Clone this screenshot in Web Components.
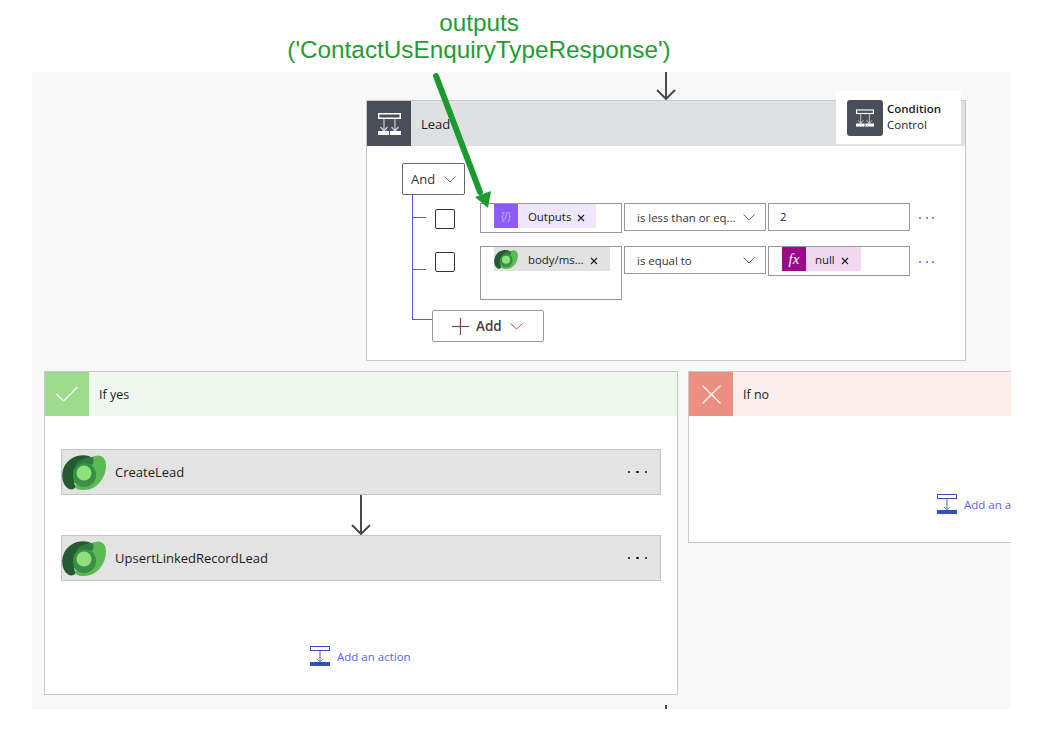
<!DOCTYPE html>
<html>
<head>
<meta charset="utf-8">
<title>Condition</title>
<style>
  html, body { margin: 0; background: #fff; }
  body { font-family: "Open Sans", "Noto Sans", sans-serif; color: #1b1b1b; }
</style>
</head>
<body>
<flow-page></flow-page>

<script>
const LOGO = (w, h) => `
  <svg width="${w}" height="${h}" viewBox="0 0 44 35">
    <path d="M33 1c6-2 11 2 11 9 0 13-9 25-22 25-6 0-10-2-12-6 5 2 11 1 15-3 6-6 6-15 2-20-1-2 2-4 6-5z" fill="#5cba55"/>
    <path d="M27 1C17-2 6 3 2 12c-4 9-1 19 5 22 3 1 7 0 6-3-1-4-2-9 1-14 3-6 9-9 15-8 2-3 1-7-2-8z" fill="#235c30"/>
    <path d="M16 7c4-3 9-5 14-5 2 1 2 5 0 8-6-1-11 1-15 6-2-3-1-7 1-9z" fill="#2f7d3e"/>
    <path d="M12 27c2 3 6 5 10 5 8 0 13-7 12-14-1-6-6-10-11-10-7 0-13 5-12 13z" fill="#3a9045"/>
    <circle cx="22" cy="18" r="7.500" fill="#8fe27a"/>
  </svg>`;

const COND_ICON = (w, h) => `
  <svg width="${w}" height="${h}" viewBox="0 0 23 22" fill="none" stroke="#fff" style="display:block">
    <rect x=".75" y=".75" width="21.500" height="4.500" stroke-width="1.500"/>
    <path d="M6 6v12M17 6v12M2.500 14l3.500 4 3.500-4M13.500 14l3.500 4 3.500-4" stroke-width="1.200" stroke="#c9ccd2"/>
    <rect x="0" y="18" width="11" height="4" fill="#fff" stroke="none"/>
    <rect x="12" y="18" width="11" height="4" fill="#fff" stroke="none"/>
  </svg>`;

class FlowArrow extends HTMLElement {
  constructor() {
    super();
    this.attachShadow({ mode: 'open' });
    const h = Number(this.getAttribute('h') || 28);
    this.shadowRoot.innerHTML = `
      <style>
        :host { display: block; width: 20px; height: ${h}px; }
        svg { display: block; }
      </style>
      <svg width="20" height="${h}" viewBox="0 0 20 ${h}" fill="none" stroke="#4a4a4a" stroke-width="2">
        <path d="M10 0v${h - 1}M1 ${h - 10}l9 9 9-9"/>
      </svg>`;
  }
}
customElements.define('flow-arrow', FlowArrow);

class CondToken extends HTMLElement {
  constructor() {
    super();
    this.attachShadow({ mode: 'open' });
    this.shadowRoot.innerHTML = `
      <style>
        :host {
          display: flex;
          align-items: center;
          height: 24px;
          font-size: 11.4px;
          color: #1b1b1b;
          background: var(--tok-bg, #eee);
        }
        .ic {
          width: 24px;
          height: 24px;
          flex: none;
          display: flex;
          align-items: center;
          justify-content: center;
          background: var(--ic-bg, transparent);
        }
        .txt { margin-left: var(--txt-ml, 10px); white-space: nowrap; }
        svg.x { margin-left: 6px; flex: none; margin-right: auto; position: relative; top: 2px; }
      </style>
      <span class="ic"><slot name="icon"></slot></span>
      <span class="txt"><slot></slot></span>
      <svg class="x" width="8" height="8" viewBox="0 0 8 8" stroke="#222" stroke-width="1.200"><path d="M1 1l6 6M7 1l-6 6"/></svg>`;
  }
}
customElements.define('cond-token', CondToken);

class CondRow extends HTMLElement {
  constructor() {
    super();
    this.attachShadow({ mode: 'open' });
    const tick = this.getAttribute('tick');
    const lh = this.getAttribute('left-h');
    const sh = this.getAttribute('select-h');
    const vh = this.getAttribute('value-h');
    const dy = this.getAttribute('dots-y');
    this.shadowRoot.innerHTML = `
      <style>
        :host { display: flex; align-items: flex-start; }
        .tick { width: 13px; height: 1px; background: #4a5af0; margin-top: ${tick}px; flex: none; }
        .check {
          width: 18px; height: 18px;
          border: 1px solid #333;
          border-radius: 2px;
          background: #fff;
          margin: 6px 25px 0 9px;
          flex: none;
        }
        .box {
          box-sizing: border-box;
          border: 1px solid #999;
          background: #fff;
          width: 142px;
          flex: none;
          font-size: 11.4px;
        }
        .left { height: ${lh}px; padding: 0 0 0 13px; margin-right: 2px; }
        .op {
          height: ${sh}px;
          margin-right: 2px;
          display: flex;
          align-items: center;
          justify-content: space-between;
          padding: 0 10px 0 12px;
          color: #333;
          white-space: nowrap;
        }
        .val { height: ${vh}px; }
        .dots {
          margin-left: 9px;
          margin-top: ${dy}px;
          display: flex;
          gap: 4.500px;
        }
        .dots i { width: 2px; height: 2px; border-radius: 50%; background: #5563f8; display: block; }
      </style>
      <div class="tick"></div>
      <div class="check"></div>
      <div class="box left"><slot name="left"></slot></div>
      <div class="box op"><span>${this.getAttribute('op')}</span>
        <svg width="12" height="7" viewBox="0 0 12 7" fill="none" stroke="#666"><path d="M.5.5L6 6 11.500.5"/></svg>
      </div>
      <div class="box val"><slot name="value"></slot></div>
      <div class="dots"><i></i><i></i><i></i></div>`;
  }
}
customElements.define('cond-row', CondRow);

class ConditionCard extends HTMLElement {
  constructor() {
    super();
    this.attachShadow({ mode: 'open' });
    this.shadowRoot.innerHTML = `
      <style>
        :host {
          display: block;
          position: relative;
          box-sizing: border-box;
          width: 600px;
          height: 261px;
          background: #fff;
          border: 1px solid #c8c8c8;
        }
        .head {
          height: 45px;
          background: #dfe0e2;
          display: flex;
          align-items: center;
          font-size: 13px;
        }
        .head .ic {
          width: 44px;
          height: 45px;
          background: #484f58;
          display: flex;
          align-items: center;
          justify-content: center;
          margin-right: 10px;
        }
        .tip {
          position: absolute;
          left: 469px;
          top: -10px;
          width: 125px;
          height: 54px;
          box-sizing: border-box;
          background: #fff;
          border-bottom: 1px solid #e4e4e4;
          display: flex;
          align-items: flex-start;
          padding: 9px 0 0 11px;
          font-size: 11.500px;
          line-height: 16px;
          color: #1b1b1b;
        }
        .tip .ic {
          width: 36px;
          height: 36px;
          border-radius: 3px;
          background: #484f58;
          margin-right: 4px;
          display: flex;
          align-items: center;
          justify-content: center;
        }
        .tip .t { padding-top: 1px; }
        .tip b { display: block; font-weight: 600; }
        .body { padding: 17px 0 0 35px; }
        .and {
          box-sizing: border-box;
          width: 63px;
          height: 32px;
          border: 1px solid #666;
          border-radius: 2px;
          display: flex;
          align-items: center;
          justify-content: space-between;
          padding: 0 8px;
          font-size: 13px;
          color: #333;
        }
        .tree {
          margin-left: 10px;
          border-left: 1px solid #4a5af0;
          height: 125px;
          box-sizing: border-box;
          padding-top: 8px;
        }
        .rows { display: flex; flex-direction: column; gap: 13px; }
        .add-row { display: flex; margin-top: 10px; }
        .add-row .tick { width: 19px; height: 1px; background: #4a5af0; margin-top: 9px; }
        .add {
          box-sizing: border-box;
          width: 112px;
          height: 32px;
          border: 1px solid #999;
          border-radius: 2px;
          background: #fff;
          display: flex;
          align-items: center;
          padding-left: 19px;
          gap: 7px;
          font-size: 13.500px;
          font-weight: 600;
          color: #444;
        }
      </style>
      <div class="head">
        <span class="ic">${COND_ICON(23, 22)}</span>
        <span><slot name="title"></slot></span>
      </div>
      <div class="tip">
        <span class="ic">${COND_ICON(18, 18)}</span>
        <span class="t"><b>Condition</b>Control</span>
      </div>
      <div class="body">
        <div class="and">And
          <svg width="12" height="7" viewBox="0 0 12 7" fill="none" stroke="#5a86c8"><path d="M.5.5L6 6 11.500.5"/></svg>
        </div>
        <div class="tree">
          <div class="rows"><slot></slot></div>
          <div class="add-row">
            <div class="tick"></div>
            <div class="add">
              <svg width="17" height="17" viewBox="0 0 17 17" stroke-width="1.200"><path d="M0 8.500h17" stroke="#555"/><path d="M8.500 0v17" stroke="#8a3a6a"/></svg>
              <span>Add</span>
              <svg style="margin-left:1px" width="13" height="7" viewBox="0 0 13 7" fill="none" stroke="#a0524a"><path d="M.5.5L6.500 6 12.500.5"/></svg>
            </div>
          </div>
        </div>
      </div>`;
  }
}
customElements.define('condition-card', ConditionCard);

class ActionCard extends HTMLElement {
  constructor() {
    super();
    this.attachShadow({ mode: 'open' });
    this.shadowRoot.innerHTML = `
      <style>
        :host {
          display: flex;
          align-items: center;
          box-sizing: border-box;
          width: 600px;
          height: 46px;
          background: #e3e3e3;
          border: 1px solid #c4c4c4;
          font-size: 13px;
          color: #1b1b1b;
        }
        svg.logo { flex: none; }
        .name { margin-left: 9px; flex: 1; }
        .more { display: flex; gap: 6px; margin-right: 13px; }
        .more i { width: 2.500px; height: 2.500px; border-radius: 50%; background: #111; display: block; }
      </style>
      ${LOGO(44, 35).replace('<svg', '<svg class="logo"')}
      <span class="name"><slot></slot></span>
      <span class="more"><i></i><i></i><i></i></span>`;
  }
}
customElements.define('action-card', ActionCard);

class AddAction extends HTMLElement {
  constructor() {
    super();
    this.attachShadow({ mode: 'open' });
    this.shadowRoot.innerHTML = `
      <style>
        :host {
          display: flex;
          align-items: center;
          gap: 7px;
          height: 20px;
          font-size: 11.500px;
          color: #5563fa;
          white-space: nowrap;
        }
        svg { flex: none; }
      </style>
      <svg width="20" height="20" viewBox="0 0 20 20" fill="none">
        <rect x=".5" y=".5" width="19" height="4" stroke="#3550b0"/>
        <path d="M10 5v11" stroke="#8494d0" stroke-width="1.500"/>
        <path d="M7 13l3 3 3-3" stroke="#7a8ccc"/>
        <rect y="16" width="20" height="4" fill="#3550b0"/>
      </svg>
      <span><slot></slot></span>`;
  }
}
customElements.define('add-action', AddAction);

class BranchCard extends HTMLElement {
  constructor() {
    super();
    this.attachShadow({ mode: 'open' });
    const yes = this.getAttribute('kind') === 'yes';
    this.shadowRoot.innerHTML = `
      <style>
        :host {
          display: block;
          flex: none;
          box-sizing: border-box;
          background: #fff;
          border: 1px solid #c8c8c8;
        }
        .head {
          height: 44px;
          display: flex;
          align-items: center;
          background: ${yes ? '#eef8ee' : '#fceeec'};
          font-size: 12.500px;
          color: #1b1b1b;
        }
        .ic {
          width: 44px;
          height: 44px;
          display: flex;
          align-items: center;
          justify-content: center;
          background: ${yes ? '#9ddc8c' : '#ea8f82'};
          margin-right: 10px;
          flex: none;
        }
      </style>
      <div class="head">
        <span class="ic">
          ${yes
            ? '<svg width="22" height="16" viewBox="0 0 22 16" fill="none" stroke="#fff" stroke-width="1.300"><path d="M.5 8l7 7L21.500 1"/></svg>'
            : '<svg width="19" height="19" viewBox="0 0 19 19" fill="none" stroke="#fff" stroke-width="1.200"><path d="M.5.5l18 18M18.500.5l-18 18"/></svg>'}
        </span>
        <span><slot name="title"></slot></span>
      </div>
      <slot></slot>`;
  }
}
customElements.define('branch-card', BranchCard);

class FlowPage extends HTMLElement {
  constructor() {
    super();
    this.attachShadow({ mode: 'open' });
    this.shadowRoot.innerHTML = `
      <style>
        :host { display: block; position: relative; width: 1039px; height: 750px; overflow: hidden; }
        .title {
          height: 72px;
          box-sizing: border-box;
          padding-top: 9px;
          width: 958px;
          text-align: center;
          font: 24.300px/27px "Liberation Sans", Arial, sans-serif;
          color: #1f9c32;
        }
        .canvas {
          margin-left: 32px;
          width: 979px;
          height: 637px;
          background: #f8f8f8;
          overflow: hidden;
        }
        .top-arrow { margin-left: 624px; }
        .cond { margin-left: 334px; }
        .branches { display: flex; gap: 10px; margin: 10px 0 0 12px; }
        .yes { width: 634px; height: 324px; }
        .no { width: 340px; height: 172px; }
        .list { padding: 33px 0 0 16px; }
        .mid-arrow { margin-left: 290px; height: 40px; }
        .yes add-action { margin: 65px 0 0 265px; }
        .no add-action { margin: 78px 0 0 248px; }
        .stub { width: 2px; height: 4px; background: #4a4a4a; margin: 10px 0 0 633px; }
        .pointer { position: absolute; left: 425px; top: 70px; pointer-events: none; }
        .f-var { color: #c9b8fa; font: 10px "Liberation Sans", sans-serif; }
        .fx { color: #fff; font: italic 15px "Liberation Serif", serif; }
        cond-token.outputs { width: 102px; --tok-bg: #ede6fc; --ic-bg: #8c5cf5; }
        cond-token.body { width: 116px; --tok-bg: #e2e2e2; }
        cond-token.nul { width: 79px; --tok-bg: #f2d8ee; --ic-bg: #9b0a8a; --txt-ml: 9px; margin-left: 13px; }
        .two { font-size: 11.400px; display: block; padding: 5px 0 0 11px; color: #1b1b1b; }
      </style>
      <div class="title">outputs<br>('ContactUsEnquiryTypeResponse')</div>
      <div class="canvas">
        <flow-arrow class="top-arrow" h="28"></flow-arrow>
        <condition-card class="cond">
          <span slot="title">Lead</span>
          <cond-row tick="14" dots-y="14" left-h="30" select-h="28" value-h="28" op="is less than or eq...">
            <cond-token class="outputs" slot="left"><span slot="icon" class="f-var">{/}</span>Outputs</cond-token>
            <span class="two" slot="value">2</span>
          </cond-row>
          <cond-row tick="23" dots-y="15" left-h="54" select-h="28" value-h="30" op="is equal to">
            <cond-token class="body" slot="left"><span slot="icon" style="display:flex">${LOGO(24, 19)}</span>body/ms...</cond-token>
            <cond-token class="nul" slot="value"><span slot="icon" class="fx">fx</span>null</cond-token>
          </cond-row>
        </condition-card>
        <div class="branches">
          <branch-card kind="yes" class="yes">
            <span slot="title">If yes</span>
            <div class="list">
              <action-card>CreateLead</action-card>
              <flow-arrow class="mid-arrow" h="40"></flow-arrow>
              <action-card>UpsertLinkedRecordLead</action-card>
            </div>
            <add-action>Add an action</add-action>
          </branch-card>
          <branch-card kind="no" class="no">
            <span slot="title">If no</span>
            <add-action>Add an action</add-action>
          </branch-card>
        </div>
        <div class="stub"></div>
      </div>
      <svg class="pointer" width="80" height="150" viewBox="0 0 80 150" fill="none">
        <path d="M11 6L55 122" stroke="#1b9a2e" stroke-width="6" stroke-linecap="round"/>
        <path d="M63 138L50 127 66 121z" fill="#1b9a2e"/>
      </svg>`;
  }
}
customElements.define('flow-page', FlowPage);
</script>
</body>
</html>
